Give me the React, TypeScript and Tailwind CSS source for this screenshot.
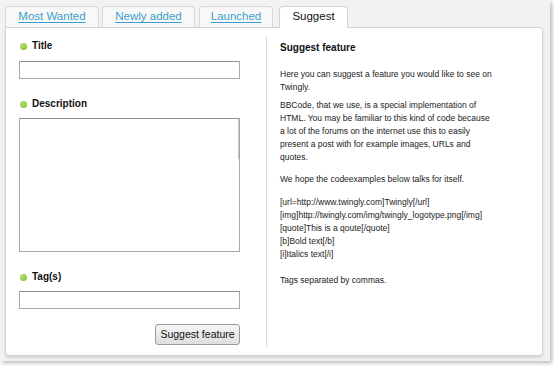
import React from "react";

const font = { fontFamily: '"Liberation Sans", Arial, sans-serif' };

function Dot() {
  return (
    <span className="inline-block w-[7px] h-[7px] rounded-full bg-[radial-gradient(circle_at_35%_35%,#b5e06a,#7fb82e)] mr-[5px]" />
  );
}

function Label({ children }: { children: React.ReactNode }) {
  return (
    <div className="flex items-center h-[12px] pl-[1px]">
      <Dot />
      <span className="text-[10px] leading-[12px] font-bold text-[#111]">{children}</span>
    </div>
  );
}

function Tab({ label, w, ml, active }: { label: string; w: string; ml: string; active?: boolean }) {
  if (active) {
    return (
      <div
        className={`${w} ${ml} bg-white border border-b-0 border-[#d4d4d4] rounded-t-[4px] flex items-center justify-center text-[11.5px] text-[#111] relative z-10 mb-[-1px] pb-[1px] h-[22px]`}
      >
        {label}
      </div>
    );
  }
  return (
    <div
      className={`${w} ${ml} h-[21px] bg-[#f8f8f8] border border-b-0 border-[#d9d9d9] rounded-t-[4px] flex items-center justify-center text-[11.5px]`}
    >
      <span className="text-[#3a9fd0] underline underline-offset-[2px]">{label}</span>
    </div>
  );
}

export default function App() {
  return (
    <div className="w-[554px] h-[366px] bg-white overflow-hidden" style={font}>
      <div className="w-[550px] h-[361px] bg-[#f2f2f2] shadow-[2px_2px_4px_rgba(0,0,0,0.28)] pt-[6px] pl-[5px]">
        <div className="flex items-end h-[21px]">
          <Tab label="Most Wanted" w="w-[94px]" ml="ml-0" />
          <Tab label="Newly added" w="w-[93px]" ml="ml-[3px]" />
          <Tab label="Launched" w="w-[74px]" ml="ml-[4px]" />
          <Tab label="Suggest" w="w-[69px]" ml="ml-[6px]" active />
        </div>
        <div className="w-[538px] h-[329px] bg-white border border-[#d4d4d4] rounded-[4px] rounded-tl-none shadow-[0_2px_3px_rgba(0,0,0,0.12)] flex py-[8px]">
          <div className="w-[261px] border-r border-[#dcdcdc] pl-[13px] pt-[4px] flex flex-col">
            <Label>Title</Label>
            <div className="mt-[9px] w-[221px] h-[18px] border border-[#a8a8a8] border-t-[#8f8f8f]" />
            <div className="mt-[19px]">
              <Label>Description</Label>
            </div>
            <div className="mt-[8px] w-[221px] h-[134px] border border-[#a8a8a8] border-t-[#8f8f8f] relative">
              <div className="absolute right-0 top-0 w-px h-[40px] bg-[#c8c8c8]" />
            </div>
            <div className="mt-[19px]">
              <Label>Tag(s)</Label>
            </div>
            <div className="mt-[8px] w-[221px] h-[18px] border border-[#a8a8a8] border-t-[#8f8f8f]" />
            <div className="mt-[15px] w-[221px] flex justify-end">
              <button className="h-[21px] w-[85px] border border-[#9c9c9c] rounded-[3px] bg-[linear-gradient(#f6f6f6,#dedede)] text-[10.5px] text-[#111] leading-none">
                Suggest feature
              </button>
            </div>
          </div>
          <div className="flex-1 pl-[13px] pt-[6px] text-[8.5px] leading-[13px] text-[#222]">
            <div className="text-[10px] leading-[12px] font-bold text-[#111]">Suggest feature</div>
            <p className="mt-[14px]">
              Here you can suggest a feature you would like to see on
              <br />
              Twingly.
            </p>
            <p className="mt-[5px]">
              BBCode, that we use, is a special implementation of
              <br />
              HTML. You may be familiar to this kind of code because
              <br />
              a lot of the forums on the internet use this to easily
              <br />
              present a post with for example images, URLs and
              <br />
              quotes.
            </p>
            <p className="mt-[9px]">We hope the codeexamples below talks for itself.</p>
            <p className="mt-[10px]">
              [url=http://www.twingly.com]Twingly[/url]
              <br />
              [img]http://twingly.com/img/twingly_logotype.png[/img]
              <br />
              [quote]This is a qoute[/quote]
              <br />
              [b]Bold text[/b]
              <br />
              [i]Italics text[/i]
            </p>
            <p className="mt-[13px]">Tags separated by commas.</p>
          </div>
        </div>
      </div>
    </div>
  );
}
